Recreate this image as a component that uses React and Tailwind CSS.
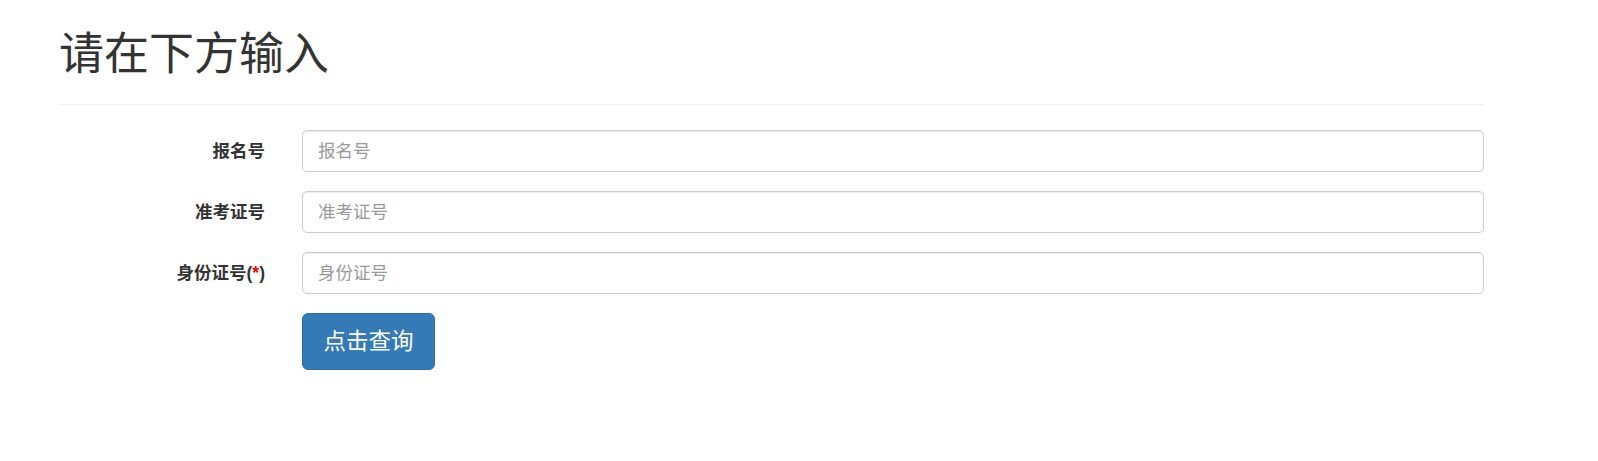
const fields = [
  { label: "报名号", placeholder: "报名号" },
  { label: "准考证号", placeholder: "准考证号" },
  { label: "身份证号", placeholder: "身份证号", required: true },
];

export default function App() {
  return (
    <div
      className="min-h-screen bg-white text-[#333]"
      style={{ fontFamily: '"Liberation Sans", "Noto Sans CJK SC", sans-serif' }}
    >
      <div className="ml-[59px] w-[1425px]">
        {/* Header */}
        <div className="pt-[30px] pb-[24px] border-b border-[#eee]">
          <h1 className="text-[45px] leading-[50px] font-normal text-[#333]">请在下方输入</h1>
        </div>

        {/* Form */}
        <form className="mt-[25px] flex flex-col gap-[19px]">
          {fields.map((f) => (
            <div key={f.label} className="flex items-center">
              <label className="w-[206px] shrink-0 text-right text-[17.5px] font-bold text-[#333]">
                {f.label}
                {f.required && (
                  <>
                    (<span className="text-[#f00]">*</span>)
                  </>
                )}
              </label>
              <input
                type="text"
                placeholder={f.placeholder}
                className="ml-[37px] flex-1 h-[42px] px-[15px] text-[17.5px] text-[#555] border border-[#ccc] rounded-[5px] shadow-[inset_0_1px_1px_rgba(0,0,0,0.075)] outline-none placeholder:text-[#999]"
              />
            </div>
          ))}
          <div className="pl-[243px]">
            <button
              type="button"
              className="w-[133px] h-[57px] rounded-[6px] bg-[#337ab7] border border-[#2e6da4] text-white text-[22.5px]"
            >
              点击查询
            </button>
          </div>
        </form>
      </div>
    </div>
  );
}
